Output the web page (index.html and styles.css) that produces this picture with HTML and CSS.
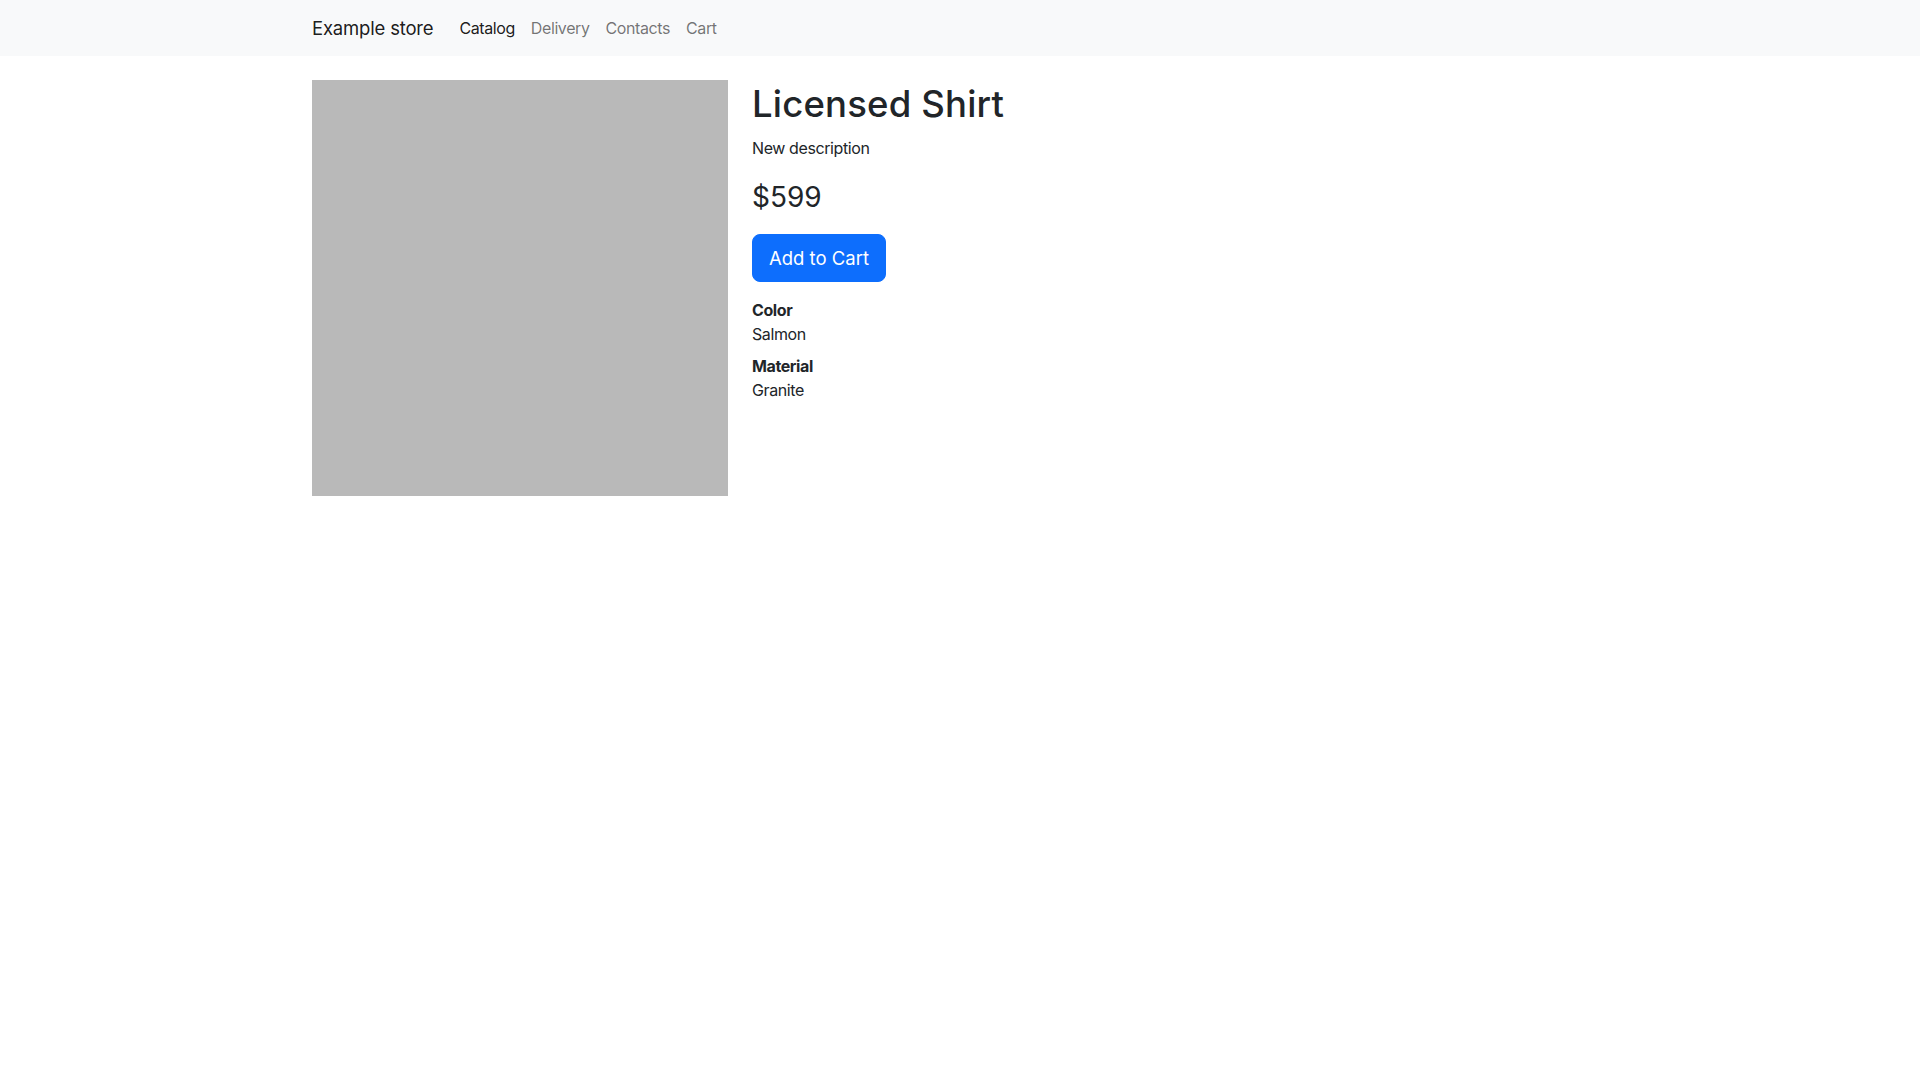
FILE: index.html
```html
<!DOCTYPE html>
<html lang="en">
<head>
<meta charset="utf-8">
<title>Licensed Shirt - Example store</title>
<link rel="stylesheet" href="styles.css">
</head>
<body>
<nav class="navbar">
  <div class="container nav-inner">
    <a class="brand" href="#">Example store</a>
    <ul class="nav-links">
      <li><a class="nav-link active" href="#">Catalog</a></li>
      <li><a class="nav-link" href="#">Delivery</a></li>
      <li><a class="nav-link" href="#">Contacts</a></li>
      <li><a class="nav-link" href="#">Cart</a></li>
    </ul>
  </div>
</nav>
<main class="container product">
  <div class="col-image"><div class="image"></div></div>
  <div class="col-info">
    <h1 class="title">Licensed Shirt</h1>
    <p class="desc">New description</p>
    <p class="price">$599</p>
    <button class="btn" type="button">Add to Cart</button>
    <dl class="props">
      <dt>Color</dt>
      <dd>Salmon</dd>
      <dt>Material</dt>
      <dd>Granite</dd>
    </dl>
  </div>
</main>
</body>
</html>
```
FILE: styles.css
```css
* { box-sizing: border-box; }
body {
  margin: 0;
  font-family: Inter, "Noto Sans", "Liberation Sans", sans-serif;
  font-size: 16px;
  line-height: 24px;
  letter-spacing: -0.025em;
  color: #212529;
  background: #fff;
}
.container {
  width: 1320px;
  margin: 0 auto;
  padding: 0 12px;
}
.navbar {
  background: #f8f9fa;
  padding: 8px 0;
}
.nav-inner {
  display: flex;
  align-items: center;
}
.brand {
  font-size: 18.5px;
  line-height: 30px;
  letter-spacing: -0.01em;
  padding: 5px 0;
  margin-right: 26px;
  color: rgba(0,0,0,0.9);
  text-decoration: none;
}
.nav-links {
  display: flex;
  list-style: none;
  margin: 0;
  padding: 0;
}
.nav-link {
  display: block;
  padding: 8px;
  color: rgba(0,0,0,0.55);
  text-decoration: none;
}
.nav-links li:first-child .nav-link { padding-left: 0; }
.nav-link.active { color: rgba(0,0,0,0.9); }
.product {
  display: flex;
  margin-top: 24px;
}
.col-image { width: 416px; flex: none; }
.image {
  width: 416px;
  height: 416px;
  background: #b9b9b9;
}
.col-info { padding-left: 24px; }
.title {
  font-size: 36.5px;
  font-weight: 500;
  line-height: 48px;
  letter-spacing: 0.005em;
  margin: 0 0 8px;
}
.desc { margin: 0 0 16px; }
.price {
  font-size: 28px;
  line-height: 42px;
  letter-spacing: 0;
  margin: 0 0 16px;
}
.btn {
  font-family: inherit;
  font-size: 18.5px;
  line-height: 30px;
  letter-spacing: 0;
  padding: 8px 16px;
  color: #fff;
  background: #0d6efd;
  border: 1px solid #0d6efd;
  border-radius: 8px;
  cursor: pointer;
  margin-bottom: 16px;
}
.props { margin: 0; }
.props dt { font-weight: 700; }
.props dd { margin: 0 0 8px; }
```
